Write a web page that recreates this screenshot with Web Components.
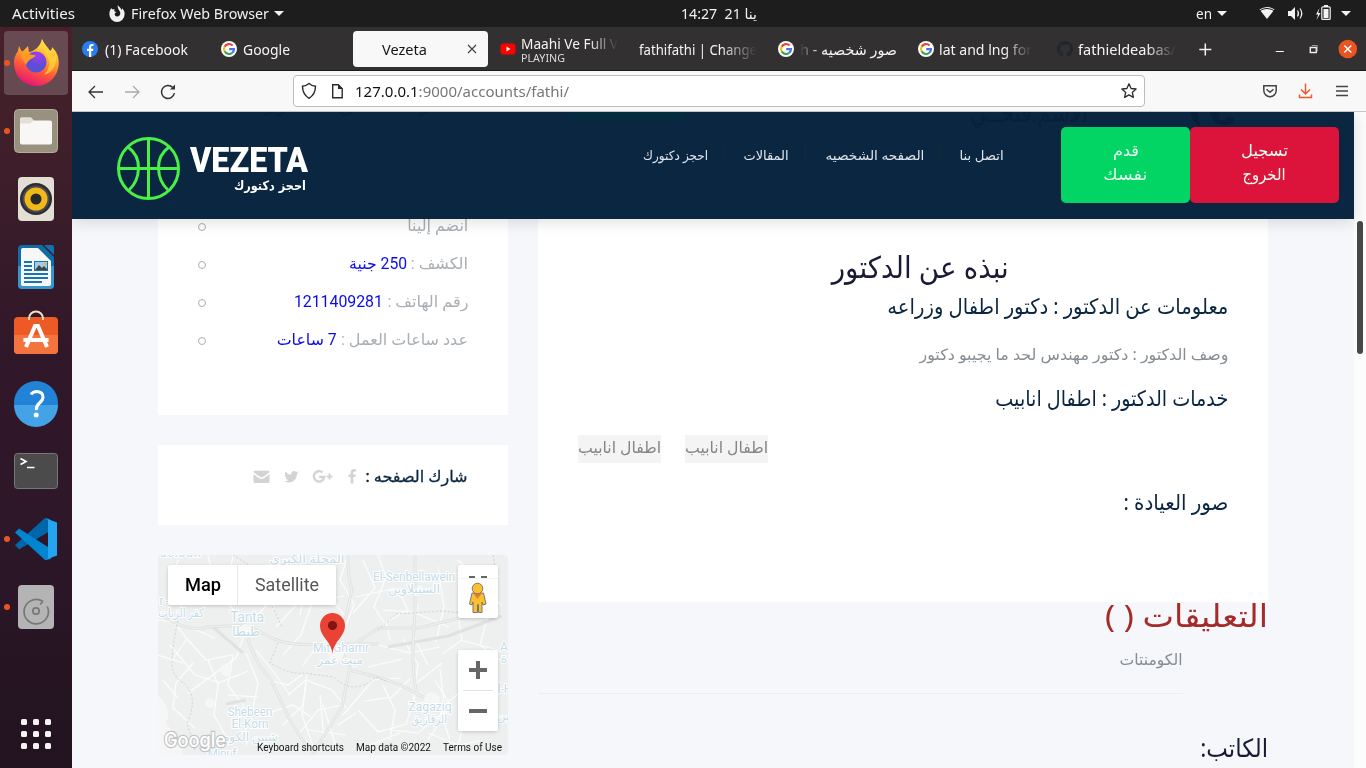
<!DOCTYPE html>
<html lang="en">
<head>
<meta charset="utf-8">
<title>Vezeta</title>
<style>
html,body{margin:0;height:100%;overflow:hidden}
body{font-family:"Noto Sans","DejaVu Sans",sans-serif;background:#1d1d1d}
</style>
</head>
<body>
<desktop-shell></desktop-shell>
<script>
const define = (name, css, html) => customElements.define(name, class extends HTMLElement {
  constructor() {
    super();
    const t = document.createElement('template');
    t.innerHTML = `<style>*{box-sizing:border-box}svg{display:block;flex:none}${css}</style>${html}`;
    this.attachShadow({mode: 'open'}).append(t.content.cloneNode(true));
  }
});

/* One line of text, stretched or narrowed to the width in its "w" attribute. */
const fitted = new Set();
customElements.define('fit-text', class extends HTMLElement {
  constructor() {
    super();
    this.attachShadow({mode: 'open'}).innerHTML =
      '<style>:host{display:block;white-space:nowrap;flex:none}span{display:inline-block}</style><span><slot></slot></span>';
  }
  connectedCallback() { this.style.width = this.getAttribute('w') + 'px'; fitted.add(this); }
  fit() {
    const s = this.shadowRoot.querySelector('span');
    s.style.transformOrigin = getComputedStyle(this).direction === 'rtl' ? 'right' : 'left';
    if (s.offsetWidth) s.style.transform = `scaleX(${+this.getAttribute('w') / s.getBoundingClientRect().width})`;
  }
});

define('google-mark', ':host{display:block;flex:none}', `
<svg width="16" height="16" viewBox="0 0 16 16"><circle cx="8" cy="8" r="8" fill="#fff"/>
<g fill="none" stroke-width="2.1"><path d="M11.6 4.6A5 5 0 0 0 3.6 5.7" stroke="#ea4335"/><path d="M3.6 5.7A5 5 0 0 0 3.6 10.3" stroke="#fbbc05"/><path d="M3.6 10.3A5 5 0 0 0 11.3 11.7" stroke="#34a853"/><path d="M8.2 8.1H13A5 5 0 0 1 11.3 11.7" stroke="#4f6ff0"/></g></svg>`);

define('top-bar', `
:host{display:flex;height:27px;background:#1d1d1d;color:#f2f2f2;font-size:14.300px;line-height:27px;align-items:center;padding-left:12px}
.a{margin-right:34px}.i{margin-right:6px}.t{margin-left:5px}
.clock{margin-left:397px}.en{margin-left:439px}`, `
<fit-text class="a" w="63">Activities</fit-text>
<svg class="i" width="16" height="17" viewBox="0 0 16 17"><path fill="#f2f2f2" d="M8.8 0c.6 1.500 2.100 2 3 3.400C12.200 4 12.300 4.600 12.300 5c.6-.5.8-1.100.8-1.800C15 5 15.800 7 15.600 9.300A7.600 7.600 0 0 1 .4 9.300C.3 7 1 4.700 2.300 3.300L3.700 4.600l2-.5C5.200 5 5 5.700 5.600 6.400l1.800.5-1.500 1.300c-.7 1.700.5 3.200 2.200 3.200 2 0 3.400-1.600 3.200-3.500C11.100 5.500 8.200 4.500 8.800 0z"/></svg>
<fit-text w="138">Firefox Web Browser</fit-text>
<svg class="t" width="10" height="5"><path d="M0 0h10L5 5z" fill="#f2f2f2"/></svg>
<fit-text class="clock" w="76">14:27&nbsp; 21 ينا</fit-text>
<fit-text class="en" w="16">en</fit-text>
<svg class="t" width="10" height="5"><path d="M0 0h10L5 5z" fill="#f2f2f2"/></svg>
<svg width="139" height="27" viewBox="1227 0 139 27"><g fill="#f2f2f2"><path d="M1259.500 9.500q7.500-5 15 0L1267 19z"/><path d="M1288 11h3l4-4v13l-4-4h-3z"/><path d="M1319.500 8l-3.500 6.500h2.200L1316.500 20l4-7h-2.300z"/><path d="M1341 11h10l-5 5z"/><path d="M1323.500 9h5v9h-5z"/><path d="M1324 5h4v2h-4z"/></g>
<path d="M1259 9.800q8-5.500 16 0" stroke="#1d1d1d" stroke-width="1" fill="none" transform="translate(0,1.400)"/><g fill="none" stroke="#f2f2f2" stroke-width="1.200"><rect x="1321.800" y="6.800" width="8.400" height="12.600" rx="1"/><path d="M1297.500 10.500q2 3 0 6"/><path d="M1300 8.500q3.500 5 0 10"/></g></svg>`);

define('dock-bar', `
:host{display:flex;flex-direction:column;gap:4px;padding:4px 4px 0;background:linear-gradient(#47202a 0,#41202a 90px,#301729 330px,#2d1729 500px,#22131f);}
.act{background:#ffffff30;border-radius:4px}.g{margin-top:60px}svg{overflow:visible}`, `
<svg class="act" width="64" height="64" viewBox="4 31 64 64"><defs>
<linearGradient id="f" x1=".75" y1="0" x2=".35" y2="1"><stop offset="0" stop-color="#fff44f"/><stop offset=".35" stop-color="#ffb02e"/><stop offset=".65" stop-color="#ff5a36"/><stop offset="1" stop-color="#e6127c"/></linearGradient>
<radialGradient id="p" cx=".6" cy=".2"><stop offset="0" stop-color="#a63af0"/><stop offset="1" stop-color="#5b4fd6"/></radialGradient></defs>
<circle cx="7" cy="63" r="3" fill="#e95420"/>
<path fill="url(#f)" d="M42 39c2 5 6 8 8 12 2-1 2-3 2-4 5 5 7 10 6.700 17A22.500 22.500 0 0 1 36 86 22.500 22.500 0 0 1 14 63c0-6 2-9 4-12l1-5 3 6 6-6 1 6c4 0 12-6 13-13z"/>
<circle cx="36" cy="62" r="10.500" fill="url(#p)"/><path fill="#ff9a24" d="M19 52c4-2 7 0 9 2 3 1 6 0 8 2l-5 3c-3 2-4 3-5 6l-4-7z"/><path fill="#ffd53a" opacity=".7" d="M42 39c-2 7 0 10 4 15 6 8 3 17-3 21 10-2 14-10 13-20-1 0-3 2-3 3-1-8-9-12-11-19z"/></svg>
<svg width="64" height="64" viewBox="4 99 64 64"><circle cx="7" cy="131" r="3" fill="#e95420"/><rect x="14.500" y="109.500" width="43" height="43" rx="4" fill="#989180" stroke="#b4ad9d"/><path d="M20 127v-8q0-1.500 1.500-1.500h9.500l3 3.500h16q2 0 2 2v5z" fill="#e2dfd6"/><rect x="20" y="120.500" width="32" height="24" rx="2" fill="#f8f7f5"/><path d="M20 122v-3q0-1.500 1.500-1.500h9.500l3 3-4 3h-10z" fill="#e2dfd6"/></svg>
<svg width="64" height="64" viewBox="4 167 64 64"><rect x="18" y="177" width="36" height="44" rx="4" fill="#e3dfd5"/><circle cx="36" cy="199" r="16" fill="#2d2d35"/><circle cx="36" cy="199" r="13.500" fill="#4a4a50"/><circle cx="36" cy="199" r="11.500" fill="#efb91a"/><circle cx="36" cy="199" r="5.500" fill="#292929"/></svg>
<svg width="64" height="64" viewBox="4 235 64 64"><path d="M22 245h20l12 12v28q0 4-4 4H22q-4 0-4-4v-36q0-4 4-4z" fill="#0d6da8"/><path d="M18 266h36v19q0 4-4 4H22q-4 0-4-4z" fill="#3697cf"/><path d="M23 248h15l13 13v23q0 2-2 2H23q-2 0-2-2v-34q0-2 2-2z" fill="#f7f7f7"/><path d="M44 245h8q2 0 2 2v8z" fill="#1172ac"/><path d="M24 262h8M24 266h8M24 270h8M24 274h24M24 278h24M24 282h18" stroke="#1775b1" stroke-width="2"/><rect x="34.500" y="261.500" width="13" height="9" fill="#9fcdec" stroke="#1775b1"/><path d="M35 270l4-5 3 3 2-2 4 4z" fill="#444"/><circle cx="45" cy="264" r="1.300" fill="#f5b820"/></svg>
<svg width="64" height="64" viewBox="4 303 64 64"><rect x="14" y="317" width="44" height="37" rx="4" fill="#ee5a25"/><path d="M14 335h44v15q0 4-4 4H18q-4 0-4-4z" fill="#f47440"/><path d="M29 320v-1.500a7 7 0 0 1 14 0V320" fill="none" stroke="#f5dfc0" stroke-width="2"/><path d="M26 347l9-21h3l9 21M23.500 340h25" stroke="#fff" stroke-width="4" fill="none"/></svg>
<svg width="64" height="64" viewBox="4 371 64 64"><circle cx="36" cy="403" r="22" fill="#2283d6"/><path d="M14 405h44a22 22 0 0 1-44 0z" fill="#44a2e6"/><path d="M31 394.500q2-3 6-3 6 .5 6 5.500 0 3-3.500 6T36.500 410" fill="none" stroke="#fff" stroke-width="3"/><circle cx="36.200" cy="415" r="2.500" fill="#fff"/></svg>
<svg width="64" height="64" viewBox="4 439 64 64"><rect x="14.500" y="453.500" width="43" height="35" rx="3" fill="#4b4b4b" stroke="#777"/><path d="M20.500 458.500l5.500 3-5.500 3M27 467.500h7.500" fill="none" stroke="#fff" stroke-width="1.700"/></svg>
<svg width="64" height="64" viewBox="4 507 64 64"><circle cx="7" cy="539" r="3" fill="#e95420"/><path d="M15 545l30-27 5 1v12L19 549.500z" fill="#0065a9"/><path d="M15 532.500l4-4L51 549v10l-6 1z" fill="#0086d1"/><path d="M45 518l12 4.500v33L45 560l3-2V520z" fill="#24a5f2"/></svg>
<svg width="64" height="64" viewBox="4 575 64 64"><circle cx="7" cy="607" r="3" fill="#e95420"/><rect x="18" y="585" width="36" height="44" rx="4" fill="#b4b4b4"/><g fill="none" stroke="#777" stroke-width="1.700"><path d="M43 601.500A12.200 12.200 0 1 0 47.500 607M43 601.500l-3 3M47.500 607h-1"/><circle cx="36" cy="611" r="3.200"/></g></svg>
<svg class="g" width="64" height="64" viewBox="4 703 64 64"><g fill="#f4f3f1"><rect x="21" y="719" width="6" height="6" rx="1.500"/><rect x="33" y="719" width="6" height="6" rx="1.500"/><rect x="45" y="719" width="6" height="6" rx="1.500"/><rect x="21" y="731" width="6" height="6" rx="1.500"/><rect x="33" y="731" width="6" height="6" rx="1.500"/><rect x="45" y="731" width="6" height="6" rx="1.500"/><rect x="21" y="743" width="6" height="6" rx="1.500"/><rect x="33" y="743" width="6" height="6" rx="1.500"/><rect x="45" y="743" width="6" height="6" rx="1.500"/></g></svg>`);

define('tab-strip', `
:host{display:flex;height:44px;background:#323031;border-bottom:1px solid #1c1b1c;color:#f4f4f4;font-size:14.500px;line-height:20px}
.tab{width:139.400px;flex:none;display:flex;align-items:center;padding-left:10px;gap:7px}
.on{padding:0 2.400px 0 2.200px}.on>div{display:flex;align-items:center;width:135px;height:36px;background:#f8f8f8;border-radius:4px;color:#15141a;padding-left:29px;gap:40px}
.fade{-webkit-mask:linear-gradient(90deg,#000 70%,transparent)}.fl{-webkit-mask:linear-gradient(270deg,#000 80%,transparent)}
.two small{display:block;font-size:11px;line-height:12px;color:#ddd}.two b{font-weight:400;display:block;line-height:18px}`, `
<div class="tab"><svg width="16" height="16"><circle cx="8" cy="8" r="8" fill="#2a7df0"/><path d="M7 16V10H5V7.700h2V6q0-3 3-3h1.500v2H10.200q-1 0-1 1v1.700H11.400L11 10H9.200v6z" fill="#fff"/></svg><fit-text w="83">(1) Facebook</fit-text></div>
<div class="tab" style="gap:6px"><google-mark></google-mark><fit-text w="47">Google</fit-text></div>
<div class="tab on"><div><fit-text w="45">Vezeta</fit-text><svg width="10" height="10"><path d="M1 1l8 8M9 1L1 9" stroke="#444" stroke-width="1.200"/></svg></div></div>
<div class="tab two" style="gap:5px"><svg width="16" height="16"><rect x=".5" y="2.500" width="15" height="11" rx="3" fill="#f00"/><path d="M6.500 5.500v5l4-2.500z" fill="#fff"/></svg><div><b class="fade"><fit-text w="97">Maahi Ve Full V</fit-text></b><small><fit-text w="44">PLAYING</fit-text></small></div></div>
<div class="tab" style="padding-left:9px"><fit-text class="fade" w="118">fathifathi | Change</fit-text></div>
<div class="tab" style="gap:6px;padding-left:9px"><google-mark></google-mark><fit-text class="fl" w="97" dir="rtl">صور شخصيه - h</fit-text></div>
<div class="tab" style="gap:5px"><google-mark></google-mark><fit-text class="fade" w="93">lat and lng for</fit-text></div>
<div class="tab" style="gap:5px;padding-left:9px"><svg width="16" height="16" viewBox="0 0 16 16"><path fill="#20272c" d="M8 0C3.580 0 0 3.580 0 8c0 3.540 2.290 6.530 5.470 7.590.4.070.55-.17.55-.38 0-.19-.01-.82-.01-1.490-2.010.37-2.530-.49-2.690-.94-.09-.23-.48-.94-.82-1.130-.28-.15-.68-.52-.01-.53.63-.01 1.080.58 1.230.82.72 1.210 1.870.87 2.330.66.070-.52.28-.87.51-1.070-1.780-.2-3.640-.89-3.640-3.950 0-.87.31-1.590.82-2.150-.08-.2-.36-1.020.08-2.120 0 0 .67-.21 2.200.82.64-.18 1.320-.27 2-.27s1.360.09 2 .27c1.530-1.040 2.200-.82 2.200-.82.44 1.100.16 1.920.08 2.120.51.56.82 1.270.82 2.150 0 3.070-1.870 3.750-3.650 3.950.29.25.54.73.54 1.480 0 1.070-.01 1.930-.01 2.200 0 .21.15.46.55.38A8 8 0 0 0 16 8c0-4.420-3.580-8-8-8z"/></svg><fit-text class="fade" w="98">fathieldeabas/</fit-text></div>
<svg width="178" height="43" viewBox="1187.200 27 178 43"><path d="M1199.500 49.500h12M1205.500 43.500v12" stroke="#f4f4f4" stroke-width="1.500"/><path d="M1276 51.500h8" stroke="#fff"/><path d="M1310.500 47.500h6v5h-6z" fill="none" stroke="#eee" stroke-width="1.400"/><path d="M1312 45.500h5.500v6" fill="none" stroke="#999"/><circle cx="1348" cy="49" r="9.300" fill="#e95420"/><path d="M1344.500 45.500l7 7M1351.500 45.500l-7 7" stroke="#fff" stroke-width="1.500"/></svg>`);

define('address-row', `
:host{display:flex;height:41px;background:#f8f8f8;border-bottom:1px solid #c4c4c2;align-items:center}
.url{display:flex;align-items:center;width:852px;height:32px;background:#fff;border:1px solid #bcbcbc;border-radius:4px;font-size:14.500px;line-height:30px;color:#777;padding-left:6px}
.url b{font-weight:400;color:#111}.url fit-text{margin-left:10px;margin-right:551px}`, `
<svg width="221" height="40" viewBox="72 71 221 40"><g fill="none" stroke-width="1.300"><path d="M103 92H89.500M95 86l-6 6 6 6" stroke="#333"/><path d="M125 92h13.500M133 86l6 6-6 6" stroke="#aaa"/><path d="M172.700 87.500a6.500 6.500 0 1 0 1.700 5.500" stroke="#333" stroke-width="1.500"/></g><path d="M170 89.500h5v-5z" fill="#333"/></svg>
<div class="url"><svg width="45" height="30" viewBox="300 76 45 30"><g fill="none" stroke="#2a2a2e" stroke-width="1.400"><path d="M309 83.500q3.500 2.800 6.500 2.800 0 8-6.500 12-6.500-4-6.500-12 3 0 6.500-2.800z"/><path d="M332.700 84.700h5.500l4 4v9h-9.500z"/></g><path d="M338 84v5h5z" fill="#2a2a2e"/></svg><fit-text w="214"><b>127.0.0.1</b>:9000/accounts/fathi/</fit-text>
<svg width="18" height="18" viewBox="0 0 18 18"><path d="M9 1.800l2.100 4.700 5 .5-3.800 3.400 1.100 5L9 12.900l-4.400 2.500 1.100-5L1.900 7l5-.5z" fill="none" stroke="#2a2a2e" stroke-width="1.300" stroke-linejoin="round"/></svg></div>
<svg width="221" height="40" viewBox="1145 71 221 40"><g fill="none" stroke="#444" stroke-width="1.500"><path d="M1263.800 85.800h12.400v4.700a6.200 6.200 0 0 1-12.400 0zM1266.500 89.300l3.500 3 3.500-3"/><path d="M1336 86.500h12M1336 91h12M1336 95.500h12"/><path d="M1305.500 83.500v10M1301 89.500l4.500 4.500 4.500-4.500M1299.500 94.500v3h12v-3" stroke="#f0582c"/></g></svg>`);

define('site-header', `
:host{display:flex;position:relative;z-index:2;height:107px;width:1282px;background:#0b2641;box-shadow:0 3px 15px rgba(0,0,0,.13);color:#dfe6ed}
.ghost{position:absolute;inset:0;overflow:hidden;color:#082139}
.ghost>*{position:absolute}
.logo{display:flex;padding:25px 0 0 45px}.name{margin:4px 0 0 10px;color:#fff}
.v{font:900 35.500px/38px Roboto,sans-serif}.s{font:700 13px/16px "DejaVu Sans",sans-serif;margin:-1px 0 0 44px}
nav{display:flex;position:absolute;left:571px;top:32px;font-size:12.800px;line-height:23px;direction:ltr}
nav i{width:1px;height:14px;background:#182838;margin:1px 19px 0 16px}
.btns{display:flex;margin:15px 15px 0 auto;height:76px;position:relative}
.btns div{border-radius:5px;width:129px;background:#02d564;color:#e9fff0;font-size:16px;line-height:24px;padding-top:11px;display:flex;flex-direction:column;align-items:center}
.btns .r{width:149px;background:#dc143c}`, `
<div class="ghost"><svg width="1282" height="107" style="left:0;top:0"><path d="M496 0h116v3q0 5-5 5H501q-5 0-5-5z" fill="#032c3e"/><path d="M1118 0h8l2 14q-8-5-10-14M1138 0h9q-2 10 6 8 2-5 10-2-4 8-10 7-12 0-15-13M1068 12h14" fill="#071f38"/></svg>
<fit-text dir="rtl" w="118" style="left:898px;top:-20px;font-size:26px;line-height:40px">الاسم:فتحــي</fit-text><fit-text dir="rtl" w="165" style="left:193px;top:-26px;font-size:22px;line-height:32px">وصف عن الدكتور</fit-text></div>
<div class="logo"><svg width="63" height="63" viewBox="0 0 63 63"><g fill="none" stroke="#48f048" stroke-width="3"><circle cx="31.500" cy="31.500" r="30"/><path d="M31.500 1.500v60M1.500 31.500h60M11 10q11 8 10.500 21.500T12 53M52 10q-11 8-10.500 21.500T51 53"/></g></svg>
<div class="name"><fit-text class="v" w="118">VEZETA</fit-text><fit-text class="s" dir="rtl" w="72">احجز دكتورك</fit-text></div></div>
<nav><fit-text dir="rtl" w="65">احجز دكتورك</fit-text><i></i><fit-text dir="rtl" w="45">المقالات</fit-text><i></i><fit-text dir="rtl" w="99">الصفحه الشخصيه</fit-text><i></i><fit-text dir="rtl" w="44">اتصل بنا</fit-text></nav>
<div class="btns"><div><fit-text dir="rtl" w="26">قدم</fit-text><fit-text dir="rtl" w="44">نفسك</fit-text></div><div class="r"><fit-text dir="rtl" w="47">تسجيل</fit-text><fit-text dir="rtl" w="43">الخروج</fit-text></div></div>`);

define('info-card', `
:host{display:block;height:196px;background:#fff;overflow:hidden;direction:rtl;font:16px/38px Roboto,"DejaVu Sans",sans-serif;color:#a9afb4;padding:0 40px}
.l{margin-top:-12px}.l div{display:flex;height:38px;gap:4px}i{width:8px;height:8px;border:1px solid #a9afb4;border-radius:50%;margin:16px auto 0 0}
.v{color:#0b0bee}`, `
<div class="l"><div><fit-text w="61">انضم إلينا</fit-text><i></i></div>
<div><fit-text w="57">الكشف :</fit-text><fit-text class="v" w="58">250 جنية</fit-text><i></i></div>
<div><fit-text w="81">رقم الهاتف :</fit-text><fit-text class="v" w="89">1211409281</fit-text><i></i></div>
<div><fit-text w="127">عدد ساعات العمل :</fit-text><fit-text class="v" w="60">7 ساعات</fit-text><i></i></div></div>`);

define('share-card', `
:host{display:flex;height:80px;background:#fff;direction:rtl;font:500 16px/20px Roboto,"DejaVu Sans",sans-serif;color:#0b2641;padding:22px 40px}
fit-text{-webkit-text-stroke:.3px}`, `
<fit-text w="102">شارك الصفحه :</fit-text>
<svg width="113" height="20" viewBox="254 467 113 20"><g fill="#d3d3d3"><path d="M357 469.200v2.300h-1.500q-1.200 0-1.200 1.200v1.700h2.600l-.4 2.600h-2.200v6.500h-2.700V477h-2.200v-2.600h2.200v-2q0-3.300 3.300-3.400z"/><path d="M299.500 472.500q-.7 1-1.600 1.600c.1 6-5.500 10.600-12.500 7.200q2.400.2 4-1.200-2-.2-2.700-2h1.300q-2.200-.8-2.300-3l1.300.3q-2-1.700-.8-3.900 2.400 3 6 3.100c-.4-3.500 3.300-4.500 5.200-2.600l1.900-.7-1.300 1.600z"/><path d="M254.500 472v-.2q0-1 1.500-1h13q1.500 0 1.500 1.200-3 3-6.500 4.700-1.500 1-3 0-3-1.700-6.500-4.700zM254.500 474q5 4.500 8 5 3-.5 8-5v7.500q0 1.500-1.500 1.500h-13q-1.500 0-1.500-1.500z"/></g><g fill="none" stroke="#d3d3d3"><path d="M323.500 472.500a5.200 5.200 0 1 0 1.700 4.500h-5" stroke-width="2.300"/><path d="M330.500 473.500v6M327.500 476.500h6" stroke-width="2"/></g></svg>`);

define('clinic-map', `
:host{display:block;position:relative;height:200px;border-radius:4px;overflow:hidden;background:#eef0ef;font-family:Roboto,"DejaVu Sans",sans-serif}
.over{position:absolute;inset:0}
.w{position:absolute;background:#fff;box-shadow:0 1px 4px -1px rgba(0,0,0,.3);border-radius:2px}
.type{left:10px;top:10px;width:168px;height:40px;display:flex;font-size:18px;line-height:40px;color:#565656}
.type div{width:70px;padding-left:17px;border-right:1px solid #e8e8e8}.type div b{color:#000;font-weight:500}.type>fit-text{margin-left:17px}
.man{right:10px;top:10px}.zoom{right:10px;top:95px}
.foot{position:absolute;right:6px;bottom:0;display:flex;gap:12px;font-size:10px;line-height:14px;color:#111}`, `
<svg class="over" width="350" height="200" viewBox="0 0 350 200">
<path d="M0 140q15 15 8 28l12 16 5 16H0z" fill="#f6f6f6"/>
<g fill="none" stroke="#fcfcfc" stroke-width="1.200">
<path d="M10 60l20 25 18 20 26-5M35 108l-17 20-3 25 22 20M50 105l10 25-4 30 14 25M75 100l-5 30 15 20 4 40M88 98l12 30-5 25M28 85l-15 22M60 128l30-12M70 140l30 2M12 90l25 30 25 8"/>
<path d="M0 65l22 3 35 15M88 75l-10 28-48 35M100 60l22-25 8-30M118 72l20-22 48-9M125 100l18-20 12-35M115 55l8-32M140 0l8 30-6 30M98 95l20 25 14 20M130 10l34 22 22 28M145 110l15-20 15-8"/>
<path d="M130 140l18-15 26 10 14 18M110 125l20 5 14-10M125 170l20-20 4-32M140 180l20-25 24-5M162 140l4 45M105 160l30-10 18 12"/>
<path d="M190 0l-8 25 14 24-8 22M205 5l12 28-22 25M220 0l8 22-12 30 12 18M240 35l10 20-22 12 4 18M198 42l35-8M225 55l30 2 36 15"/>
<path d="M260 50l-5 30 15 30M270 20l32-2M280 12l6 40-8 35M300 60l4 25-20 14M245 84l15 25-5 35M220 90l32 8 30-6M210 112l34-8M302 85l38 10M330 60l-8 30 24 18M300 5l22 20 20-4M318 30l26 20"/>
<path d="M206 146l28-4 18-18M200 155l20 22 28-8 10-30M225 130l12 25-5 30M180 170l18-12M185 160l30-35 28-2M250 150l30-5M232 175l28 3 32-26M290 155l-20 30M282 155l10 30M292 150l-15-25M280 148l-26-10M286 148l-4-34M288 148l30-22M256 130l28-22M270 178l30 12 22-4M300 190l8-28"/>
<path d="M20 5q-10 30 8 55M50 0l8 35 22 25M75 0l-5 30M0 100l25 8M5 125l15 18M148 128l-4 32 12 34M165 150l14 45M150 175l38 5M212 190l30-12"/>
</g>
<g fill="none" stroke="#e0e1e1" stroke-width="3"><path d="M0 58q30 20 50 14l38-2 28 14q20 8 55 5l50 0M88 75q5 28 25 50l20 42 18 28M190 0q0 25 4 34l-6 28-10 22M184 98l8 14-8 40-30 48M190 115q50 10 70 25l22 8M257 0v60q-5 50 2 80M195 90l26-17 40 0 32-8 45-12M55 72L85 98M230 92l60-11 54-20M88 145l-20 4"/></g>
<g fill="none" stroke="#f0f0f0" stroke-width="1.200"><path d="M0 58q30 20 50 14l38-2 28 14q20 8 55 5l50 0M88 75q5 28 25 50l20 42 18 28M190 0q0 25 4 34l-6 28-10 22M184 98l8 14-8 40-30 48M190 115q50 10 70 25l22 8M257 0v60q-5 50 2 80M195 90l26-17 40 0 32-8 45-12"/></g>
<g fill="none" stroke="#ccd0d2" stroke-width="1" stroke-dasharray="2 2"><path d="M20 66q-5 20-6 38t12 24q15 15 3 40l8 28M75 0l25 16 8 22 16 34M120 88l-8 20q20 12 34 10l30 4q20 20 42 0l12 5M220 75l18-16 44-3 50 4M335 0l5 28"/></g>
<g fill="#f5f6f6"><circle cx="88" cy="76" r="7"/><circle cx="68" cy="115" r="6"/><circle cx="52" cy="148" r="5"/><circle cx="178" cy="98" r="8"/><circle cx="274" cy="145" r="8"/></g>
<g fill="#c4dce8" stroke="#fff" stroke-width="2" paint-order="stroke" text-anchor="middle" font-size="12">
<text x="18" y="2" textLength="49">Basioun</text><text x="149" y="8" textLength="75" lengthAdjust="spacingAndGlyphs">المحلة الكبرى</text>
<text x="256" y="26" textLength="82" lengthAdjust="spacingAndGlyphs">El-Senbellawein</text><text x="256" y="38" textLength="52" lengthAdjust="spacingAndGlyphs">السنبلاوين</text>
<text x="3" y="50" textLength="16">fr-</text><text x="23" y="62" textLength="46" lengthAdjust="spacingAndGlyphs">كفر الزيات</text>
<text x="89" y="67" textLength="34" font-size="14">Tanta</text><text x="88" y="81" font-size="13.500" textLength="28" lengthAdjust="spacingAndGlyphs">طنطا</text>
<text x="183" y="97" textLength="56">Mit Ghamr</text><text x="182" y="109" textLength="46" lengthAdjust="spacingAndGlyphs">ميت غمر</text>
<text x="92" y="161" textLength="45">Shebeen</text><text x="92" y="173" textLength="37">El-Kom</text><text x="92" y="186" textLength="56" lengthAdjust="spacingAndGlyphs">شبين الكوم</text><text x="64" y="203" textLength="29">Minuf</text>
<text x="272" y="156" textLength="43">Zagaziq</text><text x="271" y="168" textLength="36" lengthAdjust="spacingAndGlyphs">الزقازيق</text><text x="346" y="96">A</text><text x="346" y="108">ة</text><text x="347" y="138">l-H</text><text x="345" y="165">ين</text></g>
<text x="6" y="192" font-family="Inter" font-size="20" font-weight="500" textLength="62" lengthAdjust="spacingAndGlyphs" fill="#fff" stroke="#c2c5c7" stroke-width="2.500" paint-order="stroke">Google</text>
<path d="M174.500 99c-1-13-12.500-17-12.500-28.500a12.500 12.500 0 0 1 25 0C187 82 175.500 86 174.500 99z" fill="#ea4335"/><circle cx="174.500" cy="70.500" r="4.600" fill="#811411"/></svg>
<div class="w type"><div><b><fit-text w="36">Map</fit-text></b></div><fit-text w="64">Satellite</fit-text></div>
<svg class="w man" width="40" height="53" viewBox="0 0 40 53"><path d="M11 12h6M23 12h6" stroke="#666" stroke-width="2"/><path d="M0 13.500h40" stroke="#f4f4f4"/><path d="M14 28h11.500l2.500 11-3 1-1-3v10.500h-3.500v-8h-1v8H15V37l-1 3-2.500-1z" fill="#fbc02d" stroke="#777"/><path d="M15 28h9l-4.500 6z" fill="#e57b37"/><circle cx="19.500" cy="23.500" r="5.300" fill="#fbc02d" stroke="#777"/></svg>
<svg class="w zoom" width="40" height="81" viewBox="0 0 40 81"><path d="M11 20h18M20 11v18M11 61h18" stroke="#666" stroke-width="4"/><path d="M5 40.500h30" stroke="#e3e3e3"/></svg>
<div class="foot"><fit-text w="87">Keyboard shortcuts</fit-text><fit-text w="75">Map data ©2022</fit-text><fit-text w="59">Terms of Use</fit-text></div>`);

define('doctor-card', `
:host{display:block;height:383px;background:#fff;direction:rtl;padding:29px 40px 0;color:#0b2641}
.h1{font-size:30px;line-height:38px;margin-right:219px;color:#1a1a36}.h3{font-size:21.500px;line-height:40px}
.p{font-size:15.500px;line-height:40px;color:#868d92;margin-top:8px}
.tags{display:flex;direction:ltr;gap:24px;margin:17px 0 19px}.tags span{width:83px;height:28px;background:#f4f4f4;font-size:15.500px;line-height:25px;color:#858585;direction:rtl}`, `
<fit-text class="h1" w="177">نبذه عن الدكتور</fit-text>
<fit-text class="h3" w="341">معلومات عن الدكتور : دكتور اطفال وزراعه</fit-text>
<fit-text class="p" w="309">وصف الدكتور : دكتور مهندس لحد ما يجيبو دكتور</fit-text>
<fit-text class="h3" style="margin-top:4px" w="233">خدمات الدكتور : اطفال انابيب</fit-text>
<div class="tags"><span><fit-text w="83">اطفال انابيب</fit-text></span><span><fit-text w="83">اطفال انابيب</fit-text></span></div>
<fit-text class="h3" w="105">صور العيادة :</fit-text>`);

define('comment-list', `
:host{display:block;direction:rtl;color:#868d92}
.t{font-size:31px;line-height:26px;height:30px;color:#a52a2a}.c{font-size:15.500px;line-height:29px;height:30px;margin:13px 85px 0 0}
hr{border:0;height:1px;background:#eaedf1;margin:18px 85px 33px 0}.k{font-size:25px;line-height:40px;color:#1a1a36}`, `
<fit-text class="t" w="163">التعليقات ( )</fit-text><fit-text class="c" w="63">الكومنتات</fit-text><hr><fit-text class="k" w="68">الكاتب:</fit-text>`);

define('site-page', `
:host{display:grid;grid-template-columns:1282px 12px;background:#f5f7fb;overflow:hidden}
.cols{display:grid;grid-template-columns:350px 730px;gap:30px;padding-left:86px;height:549px;overflow:hidden}
.side{display:flex;flex-direction:column;gap:30px}.bar{background:#fcfcfc;padding:109px 3px 0}.bar i{display:block;height:133px;width:6px;border-radius:3px;background:#474747}`, `
<div><site-header></site-header><div class="cols"><div class="side"><info-card></info-card><share-card></share-card><clinic-map></clinic-map></div><div><doctor-card></doctor-card><comment-list></comment-list></div></div></div>
<div class="bar"><i></i></div>`);

define('browser-window', ':host{display:grid;grid-template-rows:44px 41px 656px}', '<tab-strip></tab-strip><address-row></address-row><site-page></site-page>');
define('desktop-shell', ':host{display:grid;grid-template:27px 741px/72px 1294px;width:1366px;height:768px;overflow:hidden}top-bar{grid-column:1/3}',
  '<top-bar></top-bar><dock-bar></dock-bar><browser-window></browser-window>');
fitted.forEach(t => t.fit());
</script>
</body>
</html>
